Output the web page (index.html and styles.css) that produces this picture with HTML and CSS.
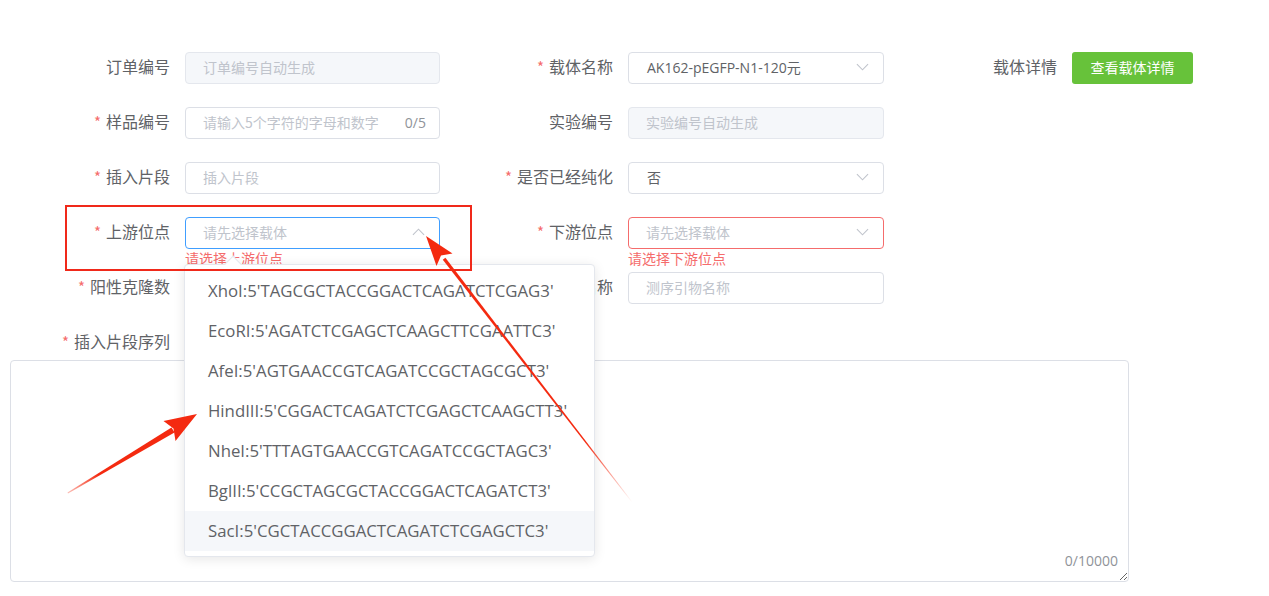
FILE: index.html
```html
<!DOCTYPE html>
<html lang="zh-CN">
<head>
<meta charset="utf-8">
<title>订单</title>
<link rel="stylesheet" href="styles.css">
</head>
<body>
<div class="page">
  <form class="form">
    <div class="row">
      <div class="item c1">
        <label class="label">订单编号</label>
        <div class="control"><div class="input disabled"><span class="ph">订单编号自动生成</span></div></div>
      </div>
      <div class="item c2">
        <label class="label"><i class="star">*</i>载体名称</label>
        <div class="control"><div class="input select"><span class="val">AK162-pEGFP-N1-120元</span><svg class="chev" viewBox="0 0 14 8"><path d="M1 1l6 6 6-6"/></svg></div></div>
      </div>
      <div class="item c3">
        <label class="label">载体详情</label>
        <button type="button" class="btn">查看载体详情</button>
      </div>
    </div>
    <div class="row">
      <div class="item c1">
        <label class="label"><i class="star">*</i>样品编号</label>
        <div class="control"><div class="input"><span class="ph">请输入5个字符的字母和数字</span><span class="count">0/5</span></div></div>
      </div>
      <div class="item c2">
        <label class="label">实验编号</label>
        <div class="control"><div class="input disabled"><span class="ph">实验编号自动生成</span></div></div>
      </div>
    </div>
    <div class="row">
      <div class="item c1">
        <label class="label"><i class="star">*</i>插入片段</label>
        <div class="control"><div class="input"><span class="ph">插入片段</span></div></div>
      </div>
      <div class="item c2">
        <label class="label"><i class="star">*</i>是否已经纯化</label>
        <div class="control"><div class="input select"><span class="val">否</span><svg class="chev" viewBox="0 0 14 8"><path d="M1 1l6 6 6-6"/></svg></div></div>
      </div>
    </div>
    <div class="row">
      <div class="item c1">
        <label class="label"><i class="star">*</i>上游位点</label>
        <div class="control">
          <div class="input select focus"><span class="ph">请先选择载体</span><svg class="chev" viewBox="0 0 14 8"><path d="M1 7l6-6 6 6"/></svg></div>
          <div class="error">请选择上游位点</div>
          <div class="dropdown">
            <div class="popper-arrow"></div>
            <ul class="options">
              <li>XhoI:5'TAGCGCTACCGGACTCAGATCTCGAG3'</li>
              <li>EcoRI:5'AGATCTCGAGCTCAAGCTTCGAATTC3'</li>
              <li>AfeI:5'AGTGAACCGTCAGATCCGCTAGCGCT3'</li>
              <li>HindIII:5'CGGACTCAGATCTCGAGCTCAAGCTT3'</li>
              <li>NheI:5'TTTAGTGAACCGTCAGATCCGCTAGC3'</li>
              <li>BglII:5'CCGCTAGCGCTACCGGACTCAGATCT3'</li>
              <li class="hover">SacI:5'CGCTACCGGACTCAGATCTCGAGCTC3'</li>
            </ul>
          </div>
        </div>
      </div>
      <div class="item c2">
        <label class="label"><i class="star">*</i>下游位点</label>
        <div class="control">
          <div class="input select invalid"><span class="ph">请先选择载体</span><svg class="chev" viewBox="0 0 14 8"><path d="M1 1l6 6 6-6"/></svg></div>
          <div class="error">请选择下游位点</div>
        </div>
      </div>
    </div>
    <div class="row">
      <div class="item c1">
        <label class="label"><i class="star">*</i>阳性克隆数</label>
        <div class="control"><div class="input"><span class="ph">阳性克隆数</span></div></div>
      </div>
      <div class="item c2">
        <label class="label">测序引物名称</label>
        <div class="control"><div class="input"><span class="ph">测序引物名称</span></div></div>
      </div>
    </div>
    <div class="seq">
      <label class="label seq-label"><i class="star">*</i>插入片段序列</label>
      <div class="textarea-wrap">
        <textarea class="textarea"></textarea>
        <span class="ta-count">0/10000</span>
      </div>
    </div>
  </form>

  <svg class="annot" width="1269" height="596" viewBox="0 0 1269 596">
    <defs>
      <linearGradient id="fade1" gradientUnits="userSpaceOnUse" x1="632" y1="502" x2="444" y2="260">
        <stop offset="0" stop-color="#f42a10" stop-opacity="0"/>
        <stop offset="0.25" stop-color="#f42a10" stop-opacity="1"/>
        <stop offset="1" stop-color="#f42a10" stop-opacity="1"/>
      </linearGradient>
      <linearGradient id="fade2" gradientUnits="userSpaceOnUse" x1="68" y1="493" x2="170" y2="431">
        <stop offset="0" stop-color="#f42a10" stop-opacity="0.3"/>
        <stop offset="0.3" stop-color="#f42a10" stop-opacity="1"/>
        <stop offset="1" stop-color="#f42a10" stop-opacity="1"/>
      </linearGradient>
    </defs>
    <rect x="66" y="206" width="405" height="64" fill="none" stroke="#f0291a" stroke-width="2"/>
    <polygon points="632.3,501.8 631.7,502.2 442.8,259.8 445.4,257.8" fill="url(#fade1)"/>
    <polygon points="426,236 452.5,253.5 441,255.5 436.5,266" fill="#f42a10"/>
    <polygon points="68,493.5 67.5,492.5 171.5,427.5 174.5,432.5" fill="url(#fade2)"/>
    <polygon points="197,414 175.5,441 173.5,428.5 163.5,421" fill="#f42a10"/>
  </svg>
</div>
</body>
</html>
```

FILE: styles.css
```css
* { box-sizing: border-box; }
html, body { margin: 0; padding: 0; background: #fff; }
body {
  font-family: "Open Sans", "Noto Sans CJK SC", sans-serif;
  color: #606266;
}
.page { position: relative; width: 1269px; height: 596px; overflow: hidden; }
.form { padding: 52px 0 0 10px; margin: 0; }
.row { display: flex; height: 32px; margin-bottom: 23px; }
.item { display: flex; align-items: center; height: 32px; }
.label {
  display: block;
  height: 32px;
  text-align: right;
  padding-right: 15px;
  padding-bottom: 3px;
  font-size: 16px;
  line-height: 29px;
  color: #606266;
  font-family: "Noto Sans CJK SC", sans-serif;
  white-space: nowrap;
}
.c1 .label { width: 175px; }
.c2 .label, .c3 .label { width: 188px; }
.c1 .control { width: 255px; }
.c2 .control { width: 256px; }
.control { position: relative; height: 32px; }
.star {
  font-style: normal;
  color: #f56c6c;
  margin-right: 5px;
  font-size: 15px;
}
.input {
  height: 32px;
  border: 1px solid #dcdfe6;
  border-radius: 4px;
  background: #fff;
  display: flex;
  align-items: center;
  padding: 0 12px 2px 17px;
  font-size: 14px;
  font-family: "Noto Sans CJK SC", sans-serif;
}
.input.disabled { background: #f5f7fa; border-color: #e4e7ed; }
.input.focus { border-color: #409eff; }
.input.invalid { border-color: #f56c6c; }
.ph { color: #c0c4cc; flex: 1; white-space: nowrap; }
.val { color: #606266; flex: 1; font-family: "Open Sans", "Noto Sans CJK SC", sans-serif; font-size: 14px; padding-left: 1px; }
.count { color: #909399; font-family: "Open Sans", sans-serif; font-size: 14px; padding-right: 1px; }
.select { padding-right: 14px; }
.chev { width: 13px; height: 8px; fill: none; stroke: #c0c4cc; stroke-width: 1.2; }
.btn {
  height: 32px;
  width: 121px;
  border: none;
  border-radius: 3px;
  background: #67c23a;
  color: #fff;
  font-size: 14px;
  font-family: "Noto Sans CJK SC", sans-serif;
  padding: 0 0 2px;
  cursor: pointer;
}
.error {
  position: absolute;
  top: 100%;
  left: 0;
  font-size: 14px;
  line-height: 18px;
  color: #f56c6c;
  white-space: nowrap;
  font-family: "Noto Sans CJK SC", sans-serif;
}
.dropdown {
  position: absolute;
  left: -1px;
  top: 47px;
  width: 411px;
  background: #fff;
  border: 1px solid #e4e7ed;
  border-radius: 4px;
  box-shadow: 0 2px 12px rgba(0, 0, 0, 0.1);
  z-index: 10;
}
.popper-arrow {
  position: absolute;
  top: -7px;
  left: 42px;
  width: 12px;
  height: 12px;
  background: #fff;
  border-left: 1px solid #e4e7ed;
  border-top: 1px solid #e4e7ed;
  transform: rotate(45deg);
}
.options { list-style: none; margin: 0; padding: 6px 0 5px; position: relative; }
.options li {
  height: 40px;
  line-height: 40px;
  padding-left: 23px;
  font-size: 16.8px;
  color: #606266;
  white-space: nowrap;
  font-family: "Open Sans", "Noto Sans CJK SC", sans-serif;
}
.options li.hover { background: #f5f7fa; }
.seq { display: block; }
.seq-label { width: 175px; height: 32px; margin-bottom: 1px; }
.textarea-wrap { position: relative; width: 1119px; height: 222px; }
.textarea {
  display: block;
  width: 100%;
  height: 100%;
  border: 1px solid #dcdfe6;
  border-radius: 4px;
  resize: both;
  padding: 5px 15px;
  font-family: "Open Sans", sans-serif;
  font-size: 14px;
  color: #606266;
  outline: none;
}
.ta-count {
  position: absolute;
  right: 11px;
  bottom: 11px;
  font-size: 14px;
  line-height: 20px;
  color: #909399;
  font-family: "Open Sans", sans-serif;
}
.annot { position: absolute; top: 0; left: 0; pointer-events: none; z-index: 20; }
```
